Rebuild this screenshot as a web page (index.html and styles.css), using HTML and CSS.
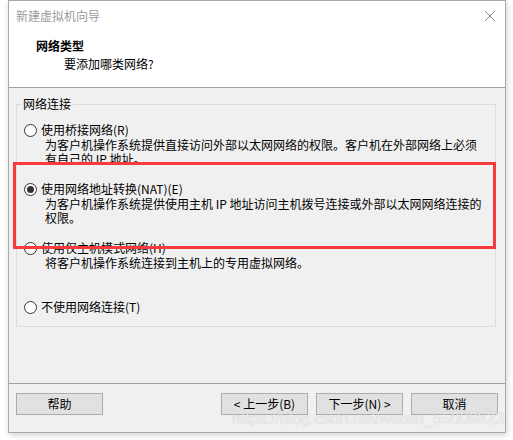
FILE: index.html
```html
<!DOCTYPE html>
<html lang="zh-CN">
<head>
<meta charset="utf-8">
<title>新建虚拟机向导</title>
<link rel="stylesheet" href="styles.css">
</head>
<body>
<div class="window">
  <div class="titlebar">
    <span class="title">新建虚拟机向导</span>
    <svg class="close" width="12" height="12" viewBox="0 0 12 12"><path d="M1 1L11 11M11 1L1 11" stroke="#8a8a8a" stroke-width="1" fill="none"/></svg>
  </div>
  <div class="header">
    <div class="h-title">网络类型</div>
    <div class="h-sub">要添加哪类网络?</div>
  </div>
  <div class="content">
    <fieldset class="group">
      <legend>网络连接</legend>
      <div class="option">
        <div class="radio-row"><span class="radio"></span><span>使用桥接网络(R)</span></div>
        <div class="desc">为客户机操作系统提供直接访问外部以太网网络的权限。客户机在外部网络上必须<br>有自己的 IP 地址。</div>
      </div>
      <div class="option">
        <div class="radio-row"><span class="radio checked"></span><span>使用网络地址转换(NAT)(E)</span></div>
        <div class="desc">为客户机操作系统提供使用主机 IP 地址访问主机拨号连接或外部以太网网络连接的<br>权限。</div>
      </div>
      <div class="option">
        <div class="radio-row"><span class="radio"></span><span>使用仅主机模式网络(H)</span></div>
        <div class="desc">将客户机操作系统连接到主机上的专用虚拟网络。</div>
      </div>
      <div class="option last">
        <div class="radio-row"><span class="radio"></span><span>不使用网络连接(T)</span></div>
      </div>
    </fieldset>
  </div>
  <div class="footer">
    <button class="btn">帮助</button>
    <div class="spacer"></div>
    <button class="btn">&lt; 上一步(B)</button>
    <button class="btn">下一步(N) &gt;</button>
    <button class="btn">取消</button>
  </div>
</div>
<div class="highlight"></div>
<div class="watermark">https://blog.csdn.net/weixin_55009823</div>
</body>
</html>
```

FILE: styles.css
```css
html, body {
  margin: 0;
  padding: 0;
  background: #ffffff;
}
body {
  position: relative;
  width: 513px;
  height: 440px;
  overflow: hidden;
  font-family: "Noto Sans CJK SC", "Microsoft YaHei", sans-serif;
  font-size: 12px;
  color: #000;
}
.window {
  box-sizing: border-box;
  margin-left: 8px;
  width: 498px;
  height: 433px;
  border: 1px solid #a9a9a9;
  background: #f0f0f0;
  display: flex;
  flex-direction: column;
  box-shadow: 1px 2px 6px rgba(0,0,0,0.18);
}
.titlebar {
  height: 30px;
  background: #fff;
  display: flex;
  align-items: center;
  justify-content: space-between;
  padding: 0 9px 0 7px;
}
.title {
  color: #9a9a9a;
  line-height: 16px;
}
.close {
  display: block;
}
.header {
  height: 56px;
  background: #fff;
  border-bottom: 1px solid #a0a0a0;
  padding: 7px 0 0 27px;
  box-sizing: border-box;
  height: 57px;
}
.h-title {
  font-weight: bold;
  line-height: 16px;
}
.h-sub {
  line-height: 16px;
  margin-top: 2px;
  padding-left: 28px;
}
.content {
  flex: 1;
  padding: 8px 9px 0 7px;
}
.group {
  margin: 0;
  border: 1px solid #dcdcdc;
  padding: 10px 0 11px 7px;
  min-width: 0;
}
.group legend {
  padding: 0 2px;
  margin-left: -3px;
  line-height: 16px;
}
.option {
  height: 59px;
}
.option.last {
  height: 16px;
}
.radio-row {
  display: flex;
  align-items: center;
  height: 16px;
  line-height: 16px;
}
.radio {
  box-sizing: border-box;
  width: 13px;
  height: 13px;
  border: 1px solid #333;
  border-radius: 50%;
  background: #fff;
  margin-right: 4px;
  display: flex;
  align-items: center;
  justify-content: center;
}
.radio.checked::after {
  content: "";
  width: 7px;
  height: 7px;
  border-radius: 50%;
  background: #333;
}
.desc {
  padding-left: 21px;
  line-height: 14px;
  white-space: nowrap;
}
.footer {
  height: 39px;
  border-top: 1px solid #a0a0a0;
  display: flex;
  align-items: flex-start;
  padding: 9px 7px 0 7px;
  gap: 8px;
}
.spacer {
  flex: 1;
}
.btn {
  width: 87px;
  height: 22px;
  border: 1px solid #adadad;
  background: #e1e1e1;
  font-family: "Noto Sans CJK SC", "Microsoft YaHei", sans-serif;
  font-size: 12px;
  line-height: 16px;
  color: #000;
  padding: 0;
}
.highlight {
  position: absolute;
  left: 13px;
  top: 162px;
  width: 477px;
  height: 81px;
  border: 3px solid #f53b3b;
}
.watermark {
  position: absolute;
  left: 232px;
  top: 410px;
  font-family: "Liberation Sans", Arial, sans-serif;
  font-size: 16px;
  color: rgba(255,255,255,0.75);
  text-shadow: 0 0 1px rgba(0,0,0,0.25);
  white-space: nowrap;
}
```
